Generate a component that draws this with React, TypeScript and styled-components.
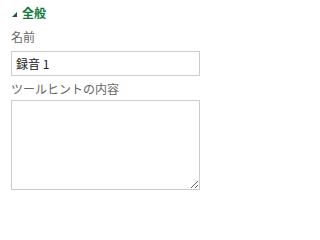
import styled, { createGlobalStyle } from "styled-components";

const GlobalStyle = createGlobalStyle`
  html, body {
    margin: 0;
    padding: 0;
    background: #ffffff;
  }
  body {
    font-family: "Noto Sans CJK JP", "Noto Sans", sans-serif;
    font-size: 12px;
  }
`;

const Panel = styled.div`
  width: 208px;
  height: 203px;
  padding: 6px 8px 0 11px;
  box-sizing: border-box;
  display: flex;
  flex-direction: column;
`;

const SectionHeader = styled.div`
  display: flex;
  align-items: center;
  gap: 5px;
  height: 14px;
  color: #0f7a3a;
  font-weight: 700;
  font-size: 12px;
  line-height: 14px;
`;

const Caret = styled.span`
  width: 0;
  height: 0;
  border-left: 5px solid transparent;
  border-bottom: 5px solid #1d5a2e;
  margin-top: 2px;
  margin-left: 1px;
`;

const Field = styled.div<{ $top: number; $gap: number }>`
  display: flex;
  flex-direction: column;
  gap: ${(p) => p.$gap}px;
  margin-top: ${(p) => p.$top}px;
`;

const Label = styled.label`
  color: #666666;
  font-size: 12px;
  line-height: 14px;
`;

const TextInput = styled.input`
  height: 25px;
  width: 189px;
  box-sizing: border-box;
  border: 1px solid #cccccc;
  padding: 0 4px;
  font-family: "Noto Sans CJK JP", "Noto Sans", sans-serif;
  font-size: 12px;
  color: #222222;
  outline: none;
`;

const TextArea = styled.textarea`
  height: 90px;
  width: 189px;
  box-sizing: border-box;
  border: 1px solid #cccccc;
  padding: 4px;
  margin: 0;
  font-family: "Noto Sans CJK JP", "Noto Sans", sans-serif;
  font-size: 12px;
  outline: none;
  display: block;
`;

export default function App() {
  return (
    <>
      <GlobalStyle />
      <Panel>
        <SectionHeader>
          <Caret />
          全般
        </SectionHeader>
        <Field $top={10} $gap={7}>
          <Label>名前</Label>
          <TextInput defaultValue="録音 1" />
        </Field>
        <Field $top={6} $gap={4}>
          <Label>ツールヒントの内容</Label>
          <TextArea />
        </Field>
      </Panel>
    </>
  );
}
